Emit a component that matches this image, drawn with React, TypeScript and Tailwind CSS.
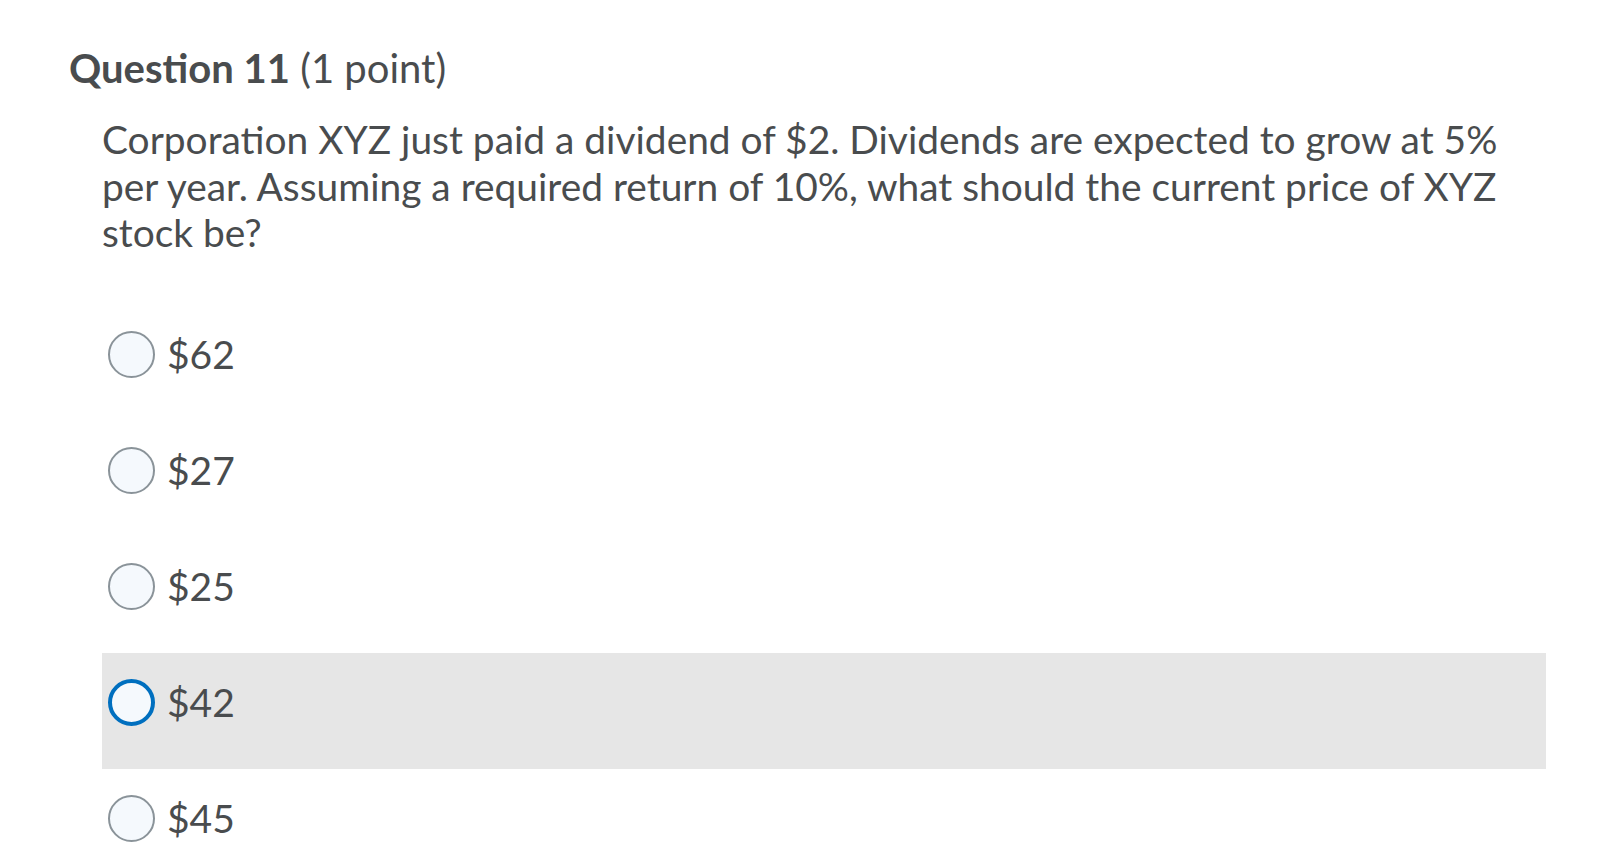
const options = [
  { label: "$62", focused: false },
  { label: "$27", focused: false },
  { label: "$25", focused: false },
  { label: "$42", focused: true },
  { label: "$45", focused: false },
];

export default function App() {
  return (
    <div className="min-h-screen bg-white text-[#494c4e] font-['Lato',sans-serif] overflow-hidden">
      <div className="pl-[69px] pt-[45px]">
        <h2 className="text-[40px] leading-[46px]">
          <span className="font-bold">Question 11</span> (1 point)
        </h2>
        <div className="pl-[33px] mt-[25px]">
          <p className="text-[38.9px] leading-[46.5px] w-[1420px]">
            Corporation XYZ just paid a dividend of $2. Dividends are expected to grow at 5% per year. Assuming a
            required return of 10%, what should the current price of XYZ stock be?
          </p>
          <div className="mt-[49px] flex flex-col w-[1444px]">
            {options.map((o) => (
              <label
                key={o.label}
                className={`flex items-start h-[116px] pl-[6px] pt-[26px] ${o.focused ? "bg-[#e6e6e6]" : ""}`}
              >
                <span
                  className={`w-[47px] h-[47px] rounded-full bg-[#f5f9fd] shrink-0 ${
                    o.focused ? "border-[4px] border-[#006fbf]" : "border-2 border-[#8a9399]"
                  }`}
                />
                <span className="ml-[12px] text-[39px] leading-[47px]">{o.label}</span>
              </label>
            ))}
          </div>
        </div>
      </div>
    </div>
  );
}
